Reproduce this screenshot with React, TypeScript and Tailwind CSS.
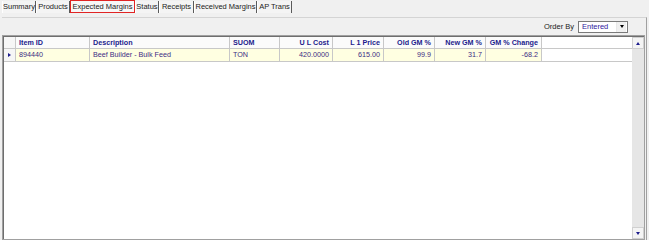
import React from "react";

const tabs = [
  { label: "Summary", w: 34 },
  { label: "Products", w: 34 },
  { label: "Expected Margins", w: 65, active: true },
  { label: "Status", w: 24 },
  { label: "Receipts", w: 35 },
  { label: "Received Margins", w: 63 },
  { label: "AP Trans", w: 35 },
];

const cols = [
  { h: "Item ID", v: "894440", w: 74, align: "left" },
  { h: "Description", v: "Beef Builder - Bulk Feed", w: 140, align: "left" },
  { h: "SUOM", v: "TON", w: 50, align: "left" },
  { h: "U L Cost", v: "420.0000", w: 53, align: "right" },
  { h: "L 1 Price", v: "615.00", w: 51, align: "right" },
  { h: "Old GM %", v: "99.9", w: 51, align: "right" },
  { h: "New GM %", v: "31.7", w: 51, align: "right" },
  { h: "GM % Change", v: "-68.2", w: 56, align: "right" },
];

export default function App() {
  return (
    <div
      className="w-[649px] h-[240px] bg-[#f0f0f0] overflow-hidden flex flex-col text-[#222]"
      style={{ fontFamily: '"Liberation Sans", Arial, sans-serif' }}
    >
      {/* Tabs */}
      <div className="h-[14px] flex pl-[2px] pt-[1px] shrink-0">
        {tabs.map((t) =>
          t.active ? (
            <div
              key={t.label}
              className="h-[13px] -mt-[1px] border border-[#e02424] bg-[#f7f7f7] flex items-center justify-center text-[7.5px] leading-none"
              style={{ width: t.w }}
            >
              {t.label}
            </div>
          ) : (
            <div
              key={t.label}
              className="h-[12px] border-l border-l-white border-r border-r-[#5a5a5a] bg-[#f4f4f4] flex items-center justify-center text-[7.5px] leading-none"
              style={{ width: t.w }}
            >
              {t.label}
            </div>
          )
        )}
      </div>

      {/* Panel */}
      <div className="mt-[3px] mx-[2px] flex-1 flex flex-col border-t border-t-[#d4d4d4] border-r border-r-[#a0a0a0]">
        {/* Toolbar */}
        <div className="h-[17px] shrink-0 flex items-center justify-end pr-[18px] gap-[4px]">
          <span className="text-[7.5px] leading-none text-[#222]">Order By</span>
          <div className="w-[50px] h-[12px] bg-white border border-[#7a7a7a] flex items-center">
            <span className="flex-1 pl-[3px] text-[7.5px] leading-none text-[#3020a0]">Entered</span>
            <div className="w-[10px] h-[10px] mr-[1px] bg-[#f0f0f0] border-l border-[#e8e8e8] flex items-center justify-center">
              <div className="w-0 h-0 border-l-[2.5px] border-r-[2.5px] border-t-[3px] border-l-transparent border-r-transparent border-t-black" />
            </div>
          </div>
        </div>

        {/* Grid */}
        <div className="flex-1 border border-[#a0a0a0] mr-[1px]">
          <div className="h-full border-l border-t border-[#6e6e6e] bg-white flex">
            <div className="flex-1 flex flex-col">
              {/* Header */}
              <div className="flex h-[12px] border-b border-[#c8c8c8]">
                <div className="w-[12px] bg-[#f6f6f6] border-r border-[#c8c8c8]" />
                {cols.map((c) => (
                  <div
                    key={c.h}
                    className={`bg-[#fbfbfb] border-r border-[#c8c8c8] flex items-center px-[3px] text-[7.2px] font-bold leading-none text-[#1c1c8c] ${
                      c.align === "right" ? "justify-end" : "justify-start"
                    }`}
                    style={{ width: c.w }}
                  >
                    {c.h}
                  </div>
                ))}
              </div>
              {/* Data row */}
              <div className="flex h-[13px] border-b border-[#c8c8c8]">
                <div className="w-[12px] bg-[#f6f6f6] border-r border-[#c8c8c8] flex items-center justify-center">
                  <div className="w-0 h-0 border-t-[2.5px] border-b-[2.5px] border-l-[3px] border-t-transparent border-b-transparent border-l-[#1c1c8c]" />
                </div>
                {cols.map((c) => (
                  <div
                    key={c.h}
                    className={`bg-[#ffffe1] border-r border-[#c8c8c8] flex items-center px-[3px] text-[7.2px] leading-none text-[#3c2c84] ${
                      c.align === "right" ? "justify-end" : "justify-start"
                    }`}
                    style={{ width: c.w }}
                  >
                    {c.v}
                  </div>
                ))}
              </div>
            </div>
            {/* Scrollbar */}
            <div className="w-[12px] bg-[#e6e6e6] flex flex-col justify-between">
              <div className="h-[12px] bg-[#f4f4f4] border border-[#d0d0d0] flex items-center justify-center">
                <div className="w-0 h-0 border-l-[2.5px] border-r-[2.5px] border-b-[3px] border-l-transparent border-r-transparent border-b-[#1c1c8c]" />
              </div>
              <div className="h-[12px] bg-[#f4f4f4] border border-[#d0d0d0] flex items-center justify-center">
                <div className="w-0 h-0 border-l-[2.5px] border-r-[2.5px] border-t-[3px] border-l-transparent border-r-transparent border-t-[#1c1c8c]" />
              </div>
            </div>
          </div>
        </div>
      </div>
    </div>
  );
}
